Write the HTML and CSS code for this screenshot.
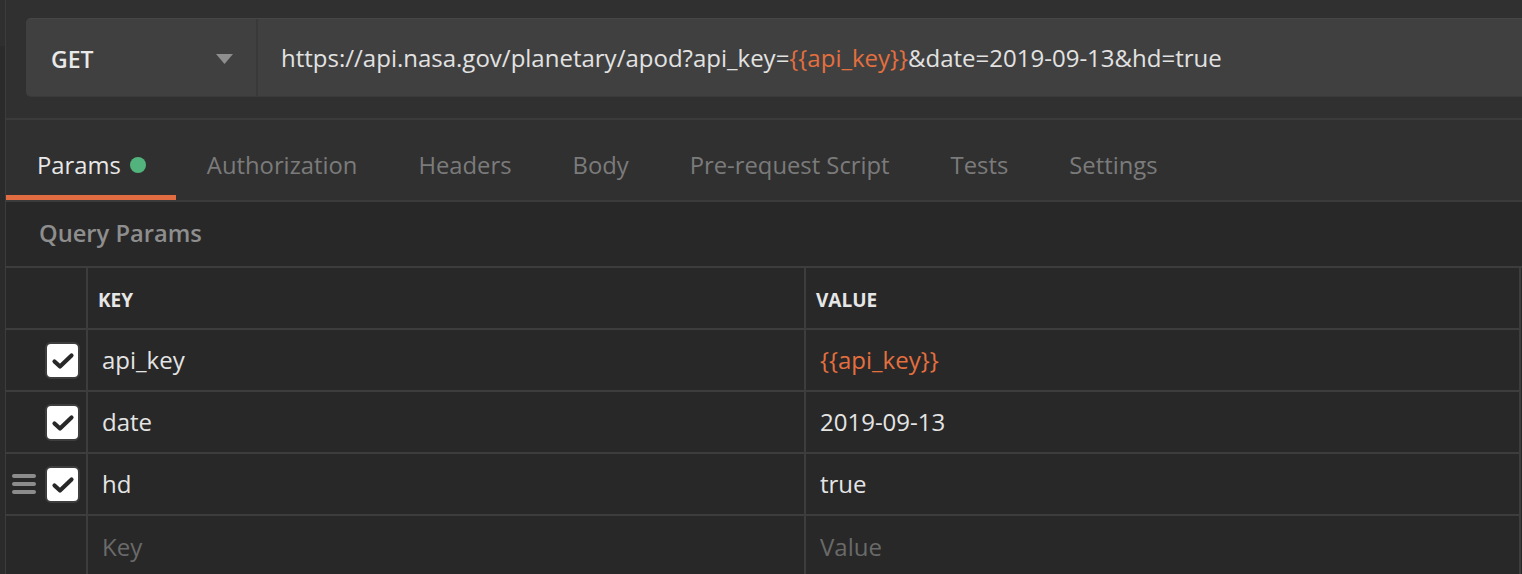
FILE: index.html
```html
<!DOCTYPE html>
<html>
<head>
<meta charset="utf-8">
<link rel="stylesheet" href="styles.css">
</head>
<body>
<div class="app">
  <div class="gutter"></div>
  <div class="panel">
    <div class="request">
      <div class="bar">
        <div class="method">
          <span class="method-name">GET</span>
          <svg class="caret" width="17" height="10" viewBox="0 0 17 10"><path d="M0 0H17L8.5 10Z" fill="#8e8e8e"/></svg>
        </div>
        <div class="url">https://api.nasa.gov/planetary/apod?api_key=<span class="var">{{api_key}}</span>&amp;date=2019-09-13&amp;hd=true</div>
      </div>
    </div>
    <div class="tabs">
      <div class="tab active">Params <span class="dot"></span></div>
      <div class="tab">Authorization</div>
      <div class="tab">Headers</div>
      <div class="tab">Body</div>
      <div class="tab">Pre-request Script</div>
      <div class="tab">Tests</div>
      <div class="tab">Settings</div>
    </div>
    <div class="content">
      <div class="section-title">Query Params</div>
      <div class="grid">
        <div class="cell c0 head"></div>
        <div class="cell head key-h">KEY</div>
        <div class="cell head val-h">VALUE</div>

        <div class="cell c0"><span class="check"><svg width="24" height="18" viewBox="0 0 24 18"><path d="M3.5 9.5L9 14.5L20.5 3.5" fill="none" stroke="#282828" stroke-width="4.2" stroke-linecap="round" stroke-linejoin="round"/></svg></span></div>
        <div class="cell key">api_key</div>
        <div class="cell val var">{{api_key}}</div>

        <div class="cell c0"><span class="check"><svg width="24" height="18" viewBox="0 0 24 18"><path d="M3.5 9.5L9 14.5L20.5 3.5" fill="none" stroke="#282828" stroke-width="4.2" stroke-linecap="round" stroke-linejoin="round"/></svg></span></div>
        <div class="cell key">date</div>
        <div class="cell val">2019-09-13</div>

        <div class="cell c0"><span class="drag"><i></i><i></i><i></i></span><span class="check"><svg width="24" height="18" viewBox="0 0 24 18"><path d="M3.5 9.5L9 14.5L20.5 3.5" fill="none" stroke="#282828" stroke-width="4.2" stroke-linecap="round" stroke-linejoin="round"/></svg></span></div>
        <div class="cell key">hd</div>
        <div class="cell val">true</div>

        <div class="cell c0 last"></div>
        <div class="cell key ph last">Key</div>
        <div class="cell val ph last">Value</div>
      </div>
    </div>
  </div>
</div>
</body>
</html>
```

FILE: styles.css
```css
* { box-sizing: border-box; }
html, body { margin: 0; padding: 0; }
body {
  background: #2b2b2b;
  font-family: "Open Sans", "Noto Sans", sans-serif;
  width: 1522px;
  height: 574px;
  overflow: hidden;
}
.app { display: flex; height: 574px; }
.gutter {
  width: 5px;
  background: #2b2b2b;
  border-top: 46px solid #2f2f2f;
}
.panel {
  flex: 1;
  border-left: 1px solid #3c3c3c;
  display: flex;
  flex-direction: column;
  background: #282828;
  min-height: 0;
}
.request {
  flex-shrink: 0;
  background: #303030;
  padding: 18px 0 21px 20px;
  border-bottom: 2px solid #3b3b3b;
}
.bar {
  height: 79px;
  display: flex;
  background: #404040;
  border-radius: 5px 0 0 5px;
  border-top: 1px solid #464646;
  border-bottom: 1px solid #3a3a3a;
}
.method {
  width: 232px;
  display: flex;
  align-items: center;
  justify-content: space-between;
  padding: 0 23px 0 25px;
  border-right: 2px solid #393939;
}
.method-name {
  color: #e9e9e9;
  font-size: 23px;
  font-weight: 600;
  margin-top: 3px;
}
.caret { margin-top: 2px; }
.url {
  display: flex;
  align-items: center;
  padding-left: 23px;
  color: #e2e2e2;
  font-size: 24px;
  white-space: nowrap;
}
.var { color: #e46f3f; }
.tabs {
  flex-shrink: 0;
  display: flex;
  height: 82px;
  background: #303030;
  border-bottom: 2px solid #3b3b3b;
}
.tab {
  display: flex;
  align-items: center;
  padding: 14px 30px 0 31px;
  font-size: 23.8px;
  color: #7b7b7b;
  white-space: nowrap;
  border-bottom: 5px solid transparent;
}
.tab.active {
  color: #e8e8e8;
  border-bottom-color: #e26c42;
}
.dot {
  display: inline-block;
  width: 16px;
  height: 16px;
  border-radius: 50%;
  background: #52b47c;
  margin-left: 9px;
  margin-top: 1px;
}
.content { flex: 1; min-height: 0; overflow: hidden; background: #282828; }
.section-title {
  height: 64px;
  display: flex;
  align-items: center;
  padding: 0 0 2px 33px;
  font-size: 23.7px;
  font-weight: 600;
  color: #8e8e8e;
}
.grid {
  display: grid;
  grid-template-columns: 82px 718px 715px;
  grid-auto-rows: 62px;
  border-top: 2px solid #3d3d3d;
}
.cell {
  display: flex;
  align-items: center;
  border-right: 2px solid #3d3d3d;
  border-bottom: 2px solid #3d3d3d;
  font-size: 24px;
  color: #e4e4e4;
  white-space: nowrap;
  padding-bottom: 2px;
}
.cell.last { border-bottom: none; }
.head {
  font-size: 19px;
  font-weight: 700;
  color: #e6e6e6;
  padding-bottom: 0;
  padding-top: 3px;
}
.key-h { padding-left: 10px; }
.val-h { padding-left: 10px; }
.key { padding-left: 14px; }
.val { padding-left: 14px; }
.val.var { color: #e46f3f; }
.ph { color: #6a6a6a; }
.c0 {
  justify-content: flex-end;
  padding-right: 6px;
  padding-bottom: 0;
}
.check {
  width: 35px;
  height: 37px;
  background: #ffffff;
  border: 2px solid #3e3e3e;
  border-radius: 6px;
  display: flex;
  align-items: center;
  justify-content: center;
}
.check svg { margin-top: 1px; margin-left: 1px; }
.drag {
  display: flex;
  flex-direction: column;
  gap: 4.5px;
  margin-right: 9px;
}
.drag i {
  display: block;
  width: 24px;
  height: 3.5px;
  border-radius: 2px;
  background: #8c8c8c;
}
```
